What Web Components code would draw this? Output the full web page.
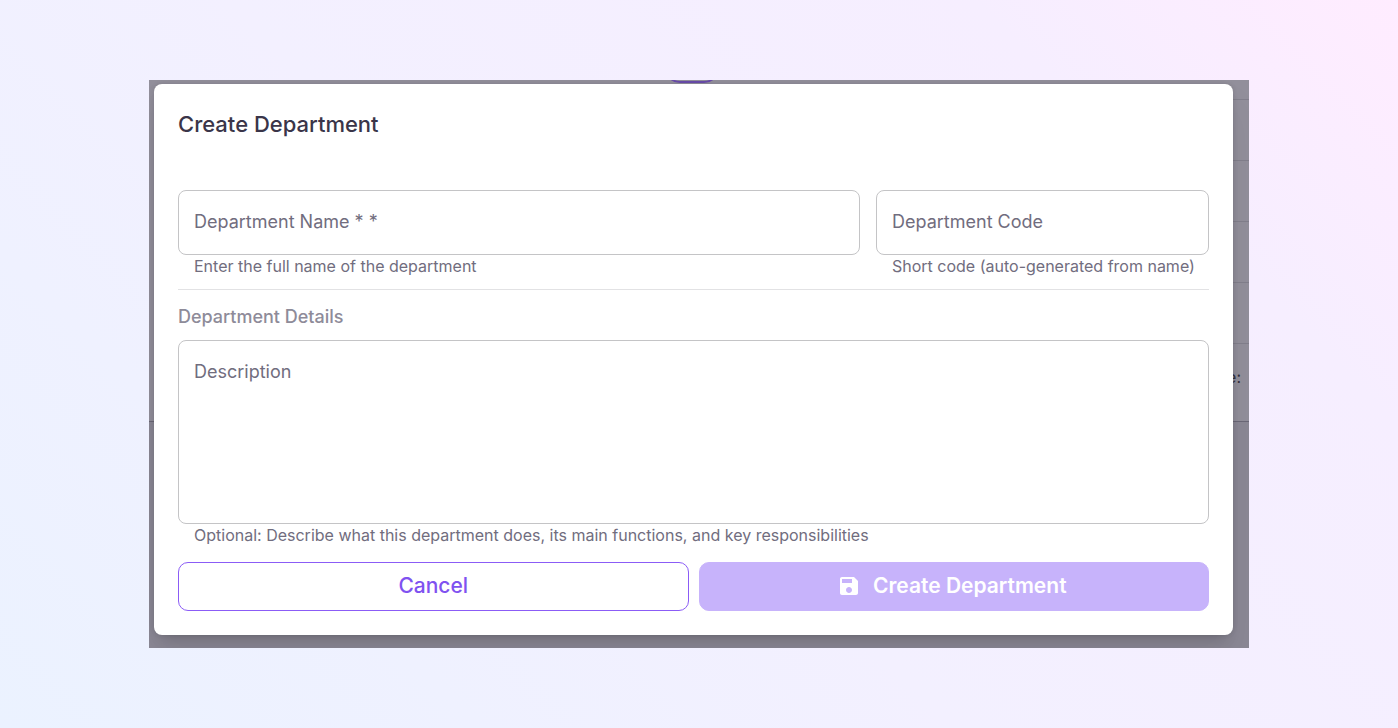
<!DOCTYPE html>
<html lang="en">
<head>
<meta charset="utf-8">
<meta name="viewport" content="width=device-width, initial-scale=1">
<title>Create Department</title>
<style>
  html { min-height: 100%; background: linear-gradient(45deg, #ebf2ff 0%, #f3f0ff 45%, #f6eeff 80%, #ffecff 100%); }
  body { margin: 0; font-family: Inter, "Liberation Sans", sans-serif; color: #3a3549; }
</style>
</head>
<body>
<modal-stage>
  <records-page slot="page"></records-page>
  <department-dialog></department-dialog>
</modal-stage>

<script>
const define = (name, html, setup) => customElements.define(name, class extends HTMLElement {
  connectedCallback() {
    if (this.shadowRoot) return;
    const template = document.createElement('template');
    template.innerHTML = html;
    this.attachShadow({ mode: 'open' }).append(template.content.cloneNode(true));
    if (setup) setup(this, this.shadowRoot);
  }
});

// Dimmed page with the dialog stacked in the same grid cell
define('modal-stage', `
  <style>
    :host { display: block; padding: 80px 149px; }
    .stage { display: grid; overflow: hidden; background: #928f9b; }
    .front { grid-area: 1 / 1; min-width: 0; padding: 4px 16px 13px 5px; position: relative; }
  </style>
  <div class="stage">
    <slot name="page"></slot>
    <div class="front"><slot></slot></div>
  </div>`);

// The page behind the dialog: a toolbar pill, list rows and a footer area
define('records-page', `
  <style>
    :host { display: flow-root; grid-area: 1 / 1; height: 0; color: #35313f; }
    .pill { box-sizing: border-box; width: 56px; height: 40px; margin: -37px 0 0 calc(50% - 35px); border: 2px solid #6a4cab; border-radius: 16px; }
    .rows { padding: 16px 0 0 16px; }
    .row { height: 60px; border-top: 1px solid #827f8c; }
    .row.tall { height: 77px; display: flex; align-items: center; justify-content: flex-end; }
    .row.tall span { font-size: 16px; line-height: 24px; padding: 0 8px 12px 0; }
    .end { height: 226px; border-top: 1px solid #6b6877; background: #8b8895; }
  </style>
  <div class="pill"></div>
  <div class="rows">
    <div class="row"></div><div class="row"></div><div class="row"></div><div class="row"></div>
    <div class="row tall"><span>e:</span></div>
  </div>
  <div class="end"></div>`);

// Outlined field with its label resting inside and a helper line below
define('outlined-field', `
  <style>
    :host { display: block; }
    .box { display: grid; }
    .box > * { grid-area: 1 / 1; }
    label { align-self: start; padding: 20px 16px; font-size: 18px; line-height: 24px; color: #716d7e; pointer-events: none; z-index: 1; }
    input, textarea { box-sizing: border-box; width: 100%; min-width: 0; height: 65px; margin: 0; padding: 20px 16px; border: 1px solid #c4c4c6; border-radius: 8px; background: #fff; font: inherit; font-size: 18px; line-height: 24px; color: #3a3549; resize: none; outline: none; display: block; }
    textarea { height: 184px; }
    input:focus, textarea:focus { border-color: #8b5cf6; }
    .box:has(:focus) label, .box:has(.filled) label { visibility: hidden; }
    .help { margin: 0; padding: 0 0 0 16px; font-size: 16px; line-height: 22px; color: #716d7e; }
  </style>
  <div class="box"><label for="control"></label></div>
  <p class="help" id="help"><slot></slot></p>`,
  (host, root) => {
    const control = document.createElement(host.hasAttribute('multiline') ? 'textarea' : 'input');
    control.id = 'control';
    control.setAttribute('aria-describedby', 'help');
    control.addEventListener('input', () => control.classList.toggle('filled', control.value !== ''));
    root.querySelector('label').textContent = host.getAttribute('label');
    root.querySelector('.box').append(control);
  });

define('action-button', `
  <style>
    :host { display: block; flex: 1; min-width: 0; }
    button { box-sizing: border-box; width: 100%; height: 49px; display: flex; align-items: center; justify-content: center; gap: 12px; margin: 0; padding: 0 16px 2px; border: 1px solid #8b5cf6; border-radius: 10px; background: #fff; color: #7f52f0; font: inherit; font-size: 21px; font-weight: 500; line-height: 32px; cursor: pointer; }
    :host([primary]) button { padding-right: 20px; border-color: #c7b3fb; background: #c7b3fb; color: #fff; font-weight: 600; }
  </style>
  <button type="button"><slot name="icon"></slot><slot></slot></button>`);

define('department-dialog', `
  <style>
    :host { display: block; }
    .dialog { padding: 24px; border-radius: 8px; background: #fff; box-shadow: 0 11px 15px -7px rgba(0,0,0,.16), 0 24px 38px 3px rgba(0,0,0,.05), 0 0 5px rgba(0,0,0,.12); }
    h2 { margin: 0 0 50px; font-size: 22px; font-weight: 500; line-height: 32px; }
    .fields { display: grid; grid-template-columns: repeat(12, minmax(0, 1fr)); column-gap: 16px; }
    .name { grid-column: span 8; }
    .code { grid-column: span 4; }
    hr { margin: 12px 0 15px; border: 0; border-top: 1px solid #e2e2e4; }
    h3 { margin: 0 0 11px; font-size: 18px; font-weight: 500; line-height: 24px; color: #8e8b99; }
    .actions { display: flex; gap: 10px; margin-top: 16px; }
    svg { display: block; width: 24px; height: 24px; fill: currentColor; }
  </style>
  <section class="dialog" role="dialog" aria-labelledby="title">
    <h2 id="title">Create Department</h2>
    <div class="fields">
      <outlined-field class="name" label="Department Name * *">Enter the full name of the department</outlined-field>
      <outlined-field class="code" label="Department Code">Short code (auto-generated from name)</outlined-field>
    </div>
    <hr>
    <h3>Department Details</h3>
    <outlined-field multiline label="Description">Optional: Describe what this department does, its main functions, and key responsibilities</outlined-field>
    <div class="actions">
      <action-button>Cancel</action-button>
      <action-button primary>
        <svg slot="icon" viewBox="0 0 24 24" aria-hidden="true"><path d="M17 3H5c-1.110 0-2 .9-2 2v14c0 1.100.890 2 2 2h14c1.100 0 2-.9 2-2V7l-4-4zm-5 16c-1.660 0-3-1.340-3-3s1.340-3 3-3 3 1.340 3 3-1.340 3-3 3zm3-10H5V5h10v4z"/></svg>Create Department</action-button>
    </div>
  </section>`);
</script>
</body>
</html>
